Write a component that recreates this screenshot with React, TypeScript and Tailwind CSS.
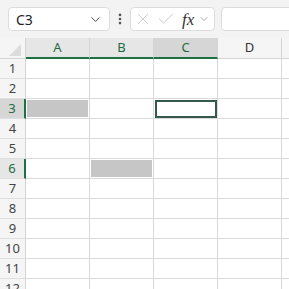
import React from 'react';
import { ChevronDown, EllipsisVertical, X, Check } from 'lucide-react';

const cols = ['A', 'B', 'C', 'D', 'E'];
const rows = [1, 2, 3, 4, 5, 6, 7, 8, 9, 10, 11, 12];

// selection state: A3 and B6 are in the range, C3 is the active cell
const selectedCols = ['A', 'B', 'C'];
const selectedRows = [3, 6];
const filled = ['A3', 'B6'];
const active = 'C3';

function ColHeader({ name }: { name: string }) {
  const sel = selectedCols.includes(name);
  const isActive = name === active[0];
  return (
    <div
      className={`flex items-center justify-center border-r border-[#d4d4d4] text-[13px] ${
        sel ? 'border-b-2 border-b-[#1e7145] text-[#1e6b42]' : 'border-b border-b-[#d4d4d4] text-[#333]'
      } ${isActive ? 'bg-[#d6d6d6]' : sel ? 'bg-[#e6e6e6]' : 'bg-[#f5f5f5]'}`}
    >
      {name}
    </div>
  );
}

function RowHeader({ n }: { n: number }) {
  const sel = selectedRows.includes(n);
  const isActive = n === Number(active.slice(1));
  return (
    <div
      className={`flex items-center justify-center border-b border-[#e0e0e0] text-[13px] ${
        sel ? 'border-r-2 border-r-[#1e7145] text-[#1e6b42]' : 'border-r border-r-[#d4d4d4] text-[#444]'
      } ${isActive ? 'bg-[#d6d6d6]' : sel ? 'bg-[#e6e6e6]' : 'bg-[#f5f5f5]'}`}
    >
      {n}
    </div>
  );
}

function Cell({ id }: { id: string }) {
  return (
    <div className="relative border-r border-b border-[#dadada] bg-white">
      {filled.includes(id) && <div className="absolute inset-[1px_1px_1px_1px] bg-[#c6c6c6]" />}
      {id === active && <div className="absolute inset-[1px_0_0_1px] border-2 border-[#35594a]" />}
    </div>
  );
}

export default function App() {
  return (
    <div className="w-[289px] h-[289px] overflow-hidden bg-white font-['Noto_Sans',sans-serif]">
      {/* formula bar */}
      <div className="flex h-[38px] items-center bg-[#f3f3f3] pl-2">
        <div className="flex h-[24px] w-[102px] shrink-0 items-center justify-between rounded-[4px] border border-[#dcdcdc] bg-white pl-[7px] pr-[6px]">
          <span className="text-[14px] text-[#222]">C3</span>
          <ChevronDown size={15} strokeWidth={1.5} className="text-[#444]" />
        </div>
        <div className="flex w-[20px] shrink-0 justify-center">
          <EllipsisVertical size={14} strokeWidth={2.5} className="text-[#555]" />
        </div>
        <div className="flex h-[24px] w-[85px] shrink-0 items-center rounded-[4px] border border-[#dcdcdc] bg-white pl-[3px]">
          <X size={18} strokeWidth={1.1} className="text-[#c4c4c4]" />
          <Check size={20} strokeWidth={1.1} className="ml-[4px] text-[#c4c4c4]" />
          <span className="ml-[6px] font-['Liberation_Serif',serif] text-[17px] italic leading-none text-[#333]">fx</span>
          <ChevronDown size={12} strokeWidth={1.5} className="ml-[4px] text-[#888]" />
        </div>
        <div className="ml-[6px] h-[24px] w-[90px] shrink-0 rounded-[4px] border border-[#dcdcdc] bg-white" />
      </div>

      {/* sheet grid */}
      <div className="grid grid-cols-[26px_64px_64px_64px_64px_64px] grid-rows-[21px_repeat(12,20px)]">
        <div className="flex items-end justify-end border-r border-b border-[#d4d4d4] bg-[#f5f5f5] pb-[2px] pr-[4px]">
          <svg width="12" height="12" viewBox="0 0 12 12">
            <polygon points="12,0 12,12 0,12" fill="#dcdcdc" />
          </svg>
        </div>
        {cols.map((c) => (
          <ColHeader key={c} name={c} />
        ))}
        {rows.map((r) => (
          <React.Fragment key={r}>
            <RowHeader n={r} />
            {cols.map((c) => (
              <Cell key={c + r} id={c + r} />
            ))}
          </React.Fragment>
        ))}
      </div>
    </div>
  );
}
